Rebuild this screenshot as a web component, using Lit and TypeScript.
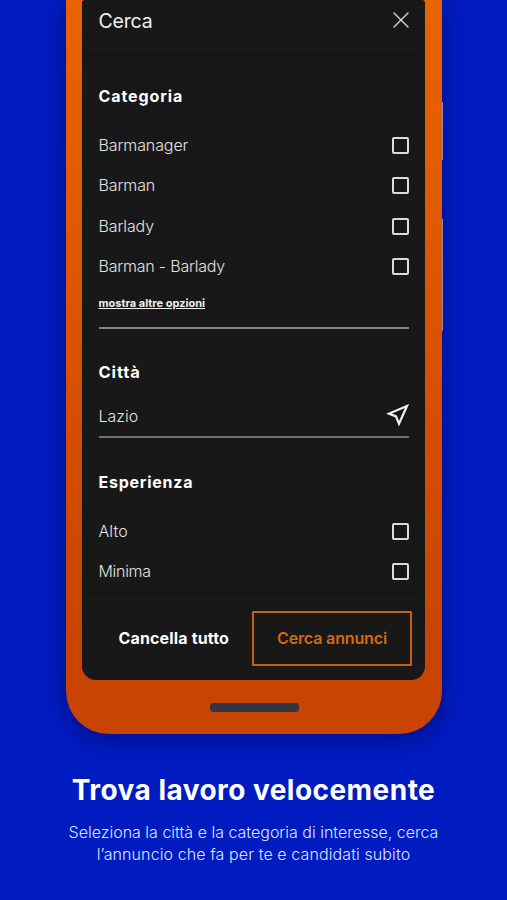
import { LitElement, html, css } from "lit";
import { customElement, property } from "lit/decorators.js";

@customElement("check-row")
class CheckRow extends LitElement {
  @property() label = "";
  @property() track = "-0.1";
  static styles = css`
    :host { display: flex; justify-content: space-between; align-items: center; height: 40.3px; }
    .label { font-size: 16px; font-weight: 300; color: #e2e2e2; white-space: pre; padding-bottom: 1.4px; }
    .box { box-sizing: border-box; width: 17px; height: 17px; border: 2px solid #dcdcdc; border-radius: 2px; }
  `;
  render() {
    return html`<span class="label" style="letter-spacing:${this.track}px">${this.label}</span><span class="box"></span>`;
  }
}

@customElement("app-root")
class AppRoot extends LitElement {
  static styles = css`
    :host {
      display: block; position: relative; width: 507px; height: 900px; overflow: hidden;
      background: #001bc0; color: #fff; font-family: Inter, "Liberation Sans", sans-serif;
    }
    .phone {
      position: relative; box-sizing: border-box; width: 375.5px; height: 734px; margin-left: 66px;
      padding: 0 16px; border-radius: 0 0 43px 43px;
      background: linear-gradient(#e96300 0, #df5900 230px, #d24c00 460px, #c94400 640px, #c94400 100%);
      box-shadow: 0 5px 24px rgba(0, 0, 50, 0.42);
    }
    .side { position: absolute; left: 375.5px; width: 1.7px; background: #9b8bb0; }
    .power { top: 102px; height: 58px; }
    .volume { top: 219px; height: 112px; }
    .screen {
      display: flex; flex-direction: column; height: 680.4px; background: #181818;
      border-radius: 3px 3px 14px 14px; overflow: hidden; width: 343.4px;
    }
    .head {
      flex: none; display: flex; justify-content: space-between; align-items: center;
      height: 40px; padding: 0 16px 12px 16.5px; box-shadow: 0 1px 6px rgba(0, 0, 0, 0.16);
    }
    .title { font-size: 19.5px; font-weight: 400; letter-spacing: -0.2px; color: #efefef; padding-top: 1px; }
    .close { width: 16px; height: 16px; }
    .body { flex: none; height: 543px; padding: 0 16.5px; display: flex; flex-direction: column; overflow: hidden; }
    h2 { margin: 0; font-size: 16px; line-height: 20px; font-weight: 700; }
    .cat { margin: 34px 0 19.5px; letter-spacing: 0.9px; }
    .more {
      align-self: flex-start; margin-top: 9px; font-size: 11px; line-height: 14px; font-weight: 700;
      color: #f0f0f0; text-decoration: underline; text-underline-offset: 1px; white-space: nowrap;
    }
    .rule { flex: none; height: 2px; background: #858585; }
    .rule1 { margin-top: 17px; }
    .city { margin: 33px 0 23px; font-size: 16.5px; letter-spacing: 0.9px; }
    .place { display: flex; justify-content: space-between; align-items: center; height: 22px; font-size: 16px; font-weight: 300; color: #e2e2e2; }
    .nav { width: 23px; height: 23px; }
    .rule2 { margin-top: 9.5px; background: #707070; }
    .exp { margin: 33.5px 0 19.5px; letter-spacing: 0.75px; }
    .foot {
      flex: 1; display: flex; align-items: center; padding: 1.5px 0 0 36.5px; box-shadow: 0 -1px 6px rgba(0, 0, 0, 0.16);
      font-size: 16px; font-weight: 700; white-space: nowrap;
    }
    .clear { width: 133.5px; letter-spacing: 0.15px; }
    .search {
      box-sizing: border-box; width: 160px; height: 55px; border: 2px solid #c4600f; color: #d9660f;
      display: flex; align-items: center; justify-content: center; border-radius: 1px; font-weight: 600; letter-spacing: -0.15px;
    }
    .home { width: 89px; height: 9px; border-radius: 3px; margin: 23px 0 0 127.5px; background: #353541; }
    .promo { text-align: center; white-space: nowrap; display: flex; flex-direction: column; align-items: center; }
    h1 { margin: 38px 0 0; font-size: 28px; line-height: 36px; font-weight: 700; letter-spacing: 0.46px; }
    p { margin: 0; font-size: 16px; line-height: 22.5px; font-weight: 300; color: #dfe3ff; }
    .first { margin-top: 12.5px; }
    .second { letter-spacing: 0.1px; }
  `;
  render() {
    return html`
      <div class="phone">
        <div class="side power"></div>
        <div class="side volume"></div>
        <div class="screen">
          <div class="head">
            <span class="title">Cerca</span>
            <svg class="close" viewBox="0 0 16 16"><path d="M1 1L15 15M15 1L1 15" stroke="#d8d8d8" stroke-width="1.4" stroke-linecap="round" /></svg>
          </div>
          <div class="body">
            <h2 class="cat">Categoria</h2>
            <check-row label="Barmanager"></check-row>
            <check-row label="Barman"></check-row>
            <check-row label="Barlady"></check-row>
            <check-row label="Barman - Barlady" track="-0.2"></check-row>
            <span class="more">mostra altre opzioni</span>
            <div class="rule rule1"></div>
            <h2 class="city">Città</h2>
            <div class="place"><span>Lazio</span>
              <svg class="nav" viewBox="0 0 23 23"><path d="M21 2L3 9.6L10 12.4L13 19.8Z" fill="none" stroke="#f2f2f2" stroke-width="2.2" stroke-linejoin="miter" /></svg>
            </div>
            <div class="rule rule2"></div>
            <h2 class="exp">Esperienza</h2>
            <check-row label="Alto" track="0.1"></check-row>
            <check-row label="Minima" track="-0.3"></check-row>
          </div>
          <div class="foot"><span class="clear">Cancella tutto</span><span class="search">Cerca annunci</span></div>
        </div>
        <div class="home"></div>
      </div>
      <div class="promo">
        <h1>Trova lavoro velocemente</h1>
        <p class="first">Seleziona la città e la categoria di interesse, cerca</p>
        <p class="second">l’annuncio che fa per te e candidati subito</p>
      </div>
    `;
  }
}
